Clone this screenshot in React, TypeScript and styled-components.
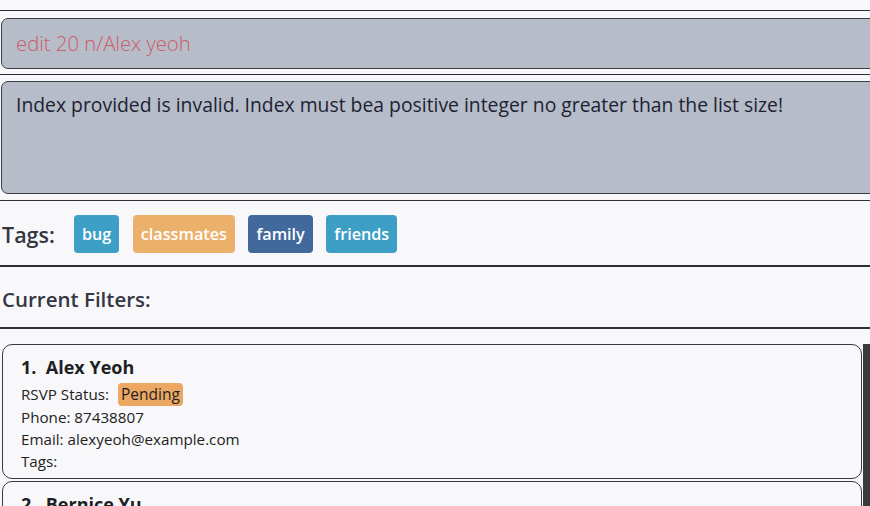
import React from "react";
import styled, { createGlobalStyle } from "styled-components";

const Global = createGlobalStyle`
  html, body { margin: 0; padding: 0; }
  body {
    width: 870px;
    height: 506px;
    overflow: hidden;
    background: #f8f8fa;
    font-family: "Open Sans", "Noto Sans", sans-serif;
  }
`;

const Page = styled.div`
  width: 870px;
  height: 506px;
  overflow: hidden;
  display: flex;
  flex-direction: column;
  background: #f8f8fa;
`;

const TopStrip = styled.div`
  height: 10px;
  flex-shrink: 0;
  border-bottom: 1.5px solid #2b2e37;
`;

const Section = styled.div<{ $top: number; $bottom: number; $line?: number }>`
  flex-shrink: 0;
  padding: ${(p) => p.$top}px 0 ${(p) => p.$bottom}px 1px;
  border-bottom: ${(p) => p.$line ?? 1.5}px solid #2b2e37;
`;

const Box = styled.div<{ $h: number }>`
  box-sizing: border-box;
  width: calc(100% + 24px);
  height: ${(p) => p.$h}px;
  background: #b6bcc8;
  border: 1.5px solid #3a3e48;
  border-radius: 7px;
  padding-left: 14px;
`;

const CommandText = styled.div`
  font-size: 20.3px;
  font-weight: 300;
  color: #cd5d68;
  line-height: 48px;
`;

const ResultText = styled.div`
  font-size: 19.35px;
  font-weight: 400;
  color: #1d1f33;
  padding-top: 9px;
  line-height: 28px;
`;

const TagsRow = styled.div`
  flex-shrink: 0;
  height: 64px;
  display: flex;
  align-items: center;
  padding-left: 2px;
  border-bottom: 2px solid #2b2e37;
`;

const Label = styled.div`
  font-size: 21.5px;
  font-weight: 600;
  color: #343744;
  margin-right: 19px;
  padding-top: 2px;
`;

const Chip = styled.span<{ $bg: string }>`
  display: inline-flex;
  align-items: center;
  height: 38px;
  margin-top: 2px;
  padding: 0 8px;
  margin-right: 13.5px;
  border-radius: 4px;
  background: ${(p) => p.$bg};
  color: #fff;
  font-size: 16.2px;
  font-weight: 600;
`;

const FilterRow = styled.div`
  flex-shrink: 0;
  height: 60px;
  display: flex;
  align-items: center;
  padding-left: 2px;
  border-bottom: 2px solid #2b2e37;
`;

const FilterLabel = styled.div`
  font-size: 20.5px;
  font-weight: 600;
  color: #343744;
  padding-top: 3px;
`;

const ListArea = styled.div`
  flex: 1;
  display: flex;
  padding-top: 15px;
  overflow: hidden;
`;

const Cards = styled.div`
  flex: 1;
  display: flex;
  flex-direction: column;
  gap: 2px;
  padding-left: 2px;
`;

const Card = styled.div`
  box-sizing: border-box;
  height: 135px;
  border: 1.3px solid #3a3d45;
  border-radius: 10px;
  padding: 9px 0 0 18px;
  color: #222;
  flex-shrink: 0;
`;

const Name = styled.div`
  font-size: 18px;
  font-weight: 700;
  color: #1e1f24;
  line-height: 26px;
  margin-bottom: 2px;
`;

const Line = styled.div`
  font-size: 15.2px;
  line-height: 22px;
  display: flex;
  align-items: center;
`;

const StatusLine = styled(Line)`
  height: 24px;
`;

const Status = styled.span`
  display: inline-flex;
  align-items: center;
  height: 23px;
  margin-left: 9px;
  padding: 0 3px;
  border-radius: 4px;
  background: #eca862;
  color: #1e1f24;
  font-size: 15.5px;
`;

const ScrollBar = styled.div`
  width: 7px;
  margin-left: 1px;
  background: #3b3b3d;
`;

const tags = [
  { t: "bug", c: "#3d9fc6" },
  { t: "classmates", c: "#ebb06a" },
  { t: "family", c: "#42699c" },
  { t: "friends", c: "#3d9fc6" },
];

export default function App() {
  return (
    <Page>
      <Global />
      <TopStrip />
      <Section $top={7} $bottom={5}>
        <Box $h={51}>
          <CommandText>edit 20 n/Alex yeoh</CommandText>
        </Box>
      </Section>
      <Section $top={6} $bottom={6}>
        <Box $h={113}>
          <ResultText>
            Index provided is invalid. Index must bea positive integer no greater than the list size!
          </ResultText>
        </Box>
      </Section>
      <TagsRow>
        <Label>Tags:</Label>
        {tags.map((x) => (
          <Chip key={x.t} $bg={x.c}>{x.t}</Chip>
        ))}
      </TagsRow>
      <FilterRow>
        <FilterLabel>Current Filters:</FilterLabel>
      </FilterRow>
      <ListArea>
        <Cards>
          <Card>
            <Name>1.&nbsp; Alex Yeoh</Name>
            <StatusLine>
              RSVP Status: <Status>Pending</Status>
            </StatusLine>
            <Line>Phone: 87438807</Line>
            <Line>Email: alexyeoh@example.com</Line>
            <Line>Tags:</Line>
          </Card>
          <Card>
            <Name>2.&nbsp; Bernice Yu</Name>
          </Card>
        </Cards>
        <ScrollBar />
      </ListArea>
    </Page>
  );
}
